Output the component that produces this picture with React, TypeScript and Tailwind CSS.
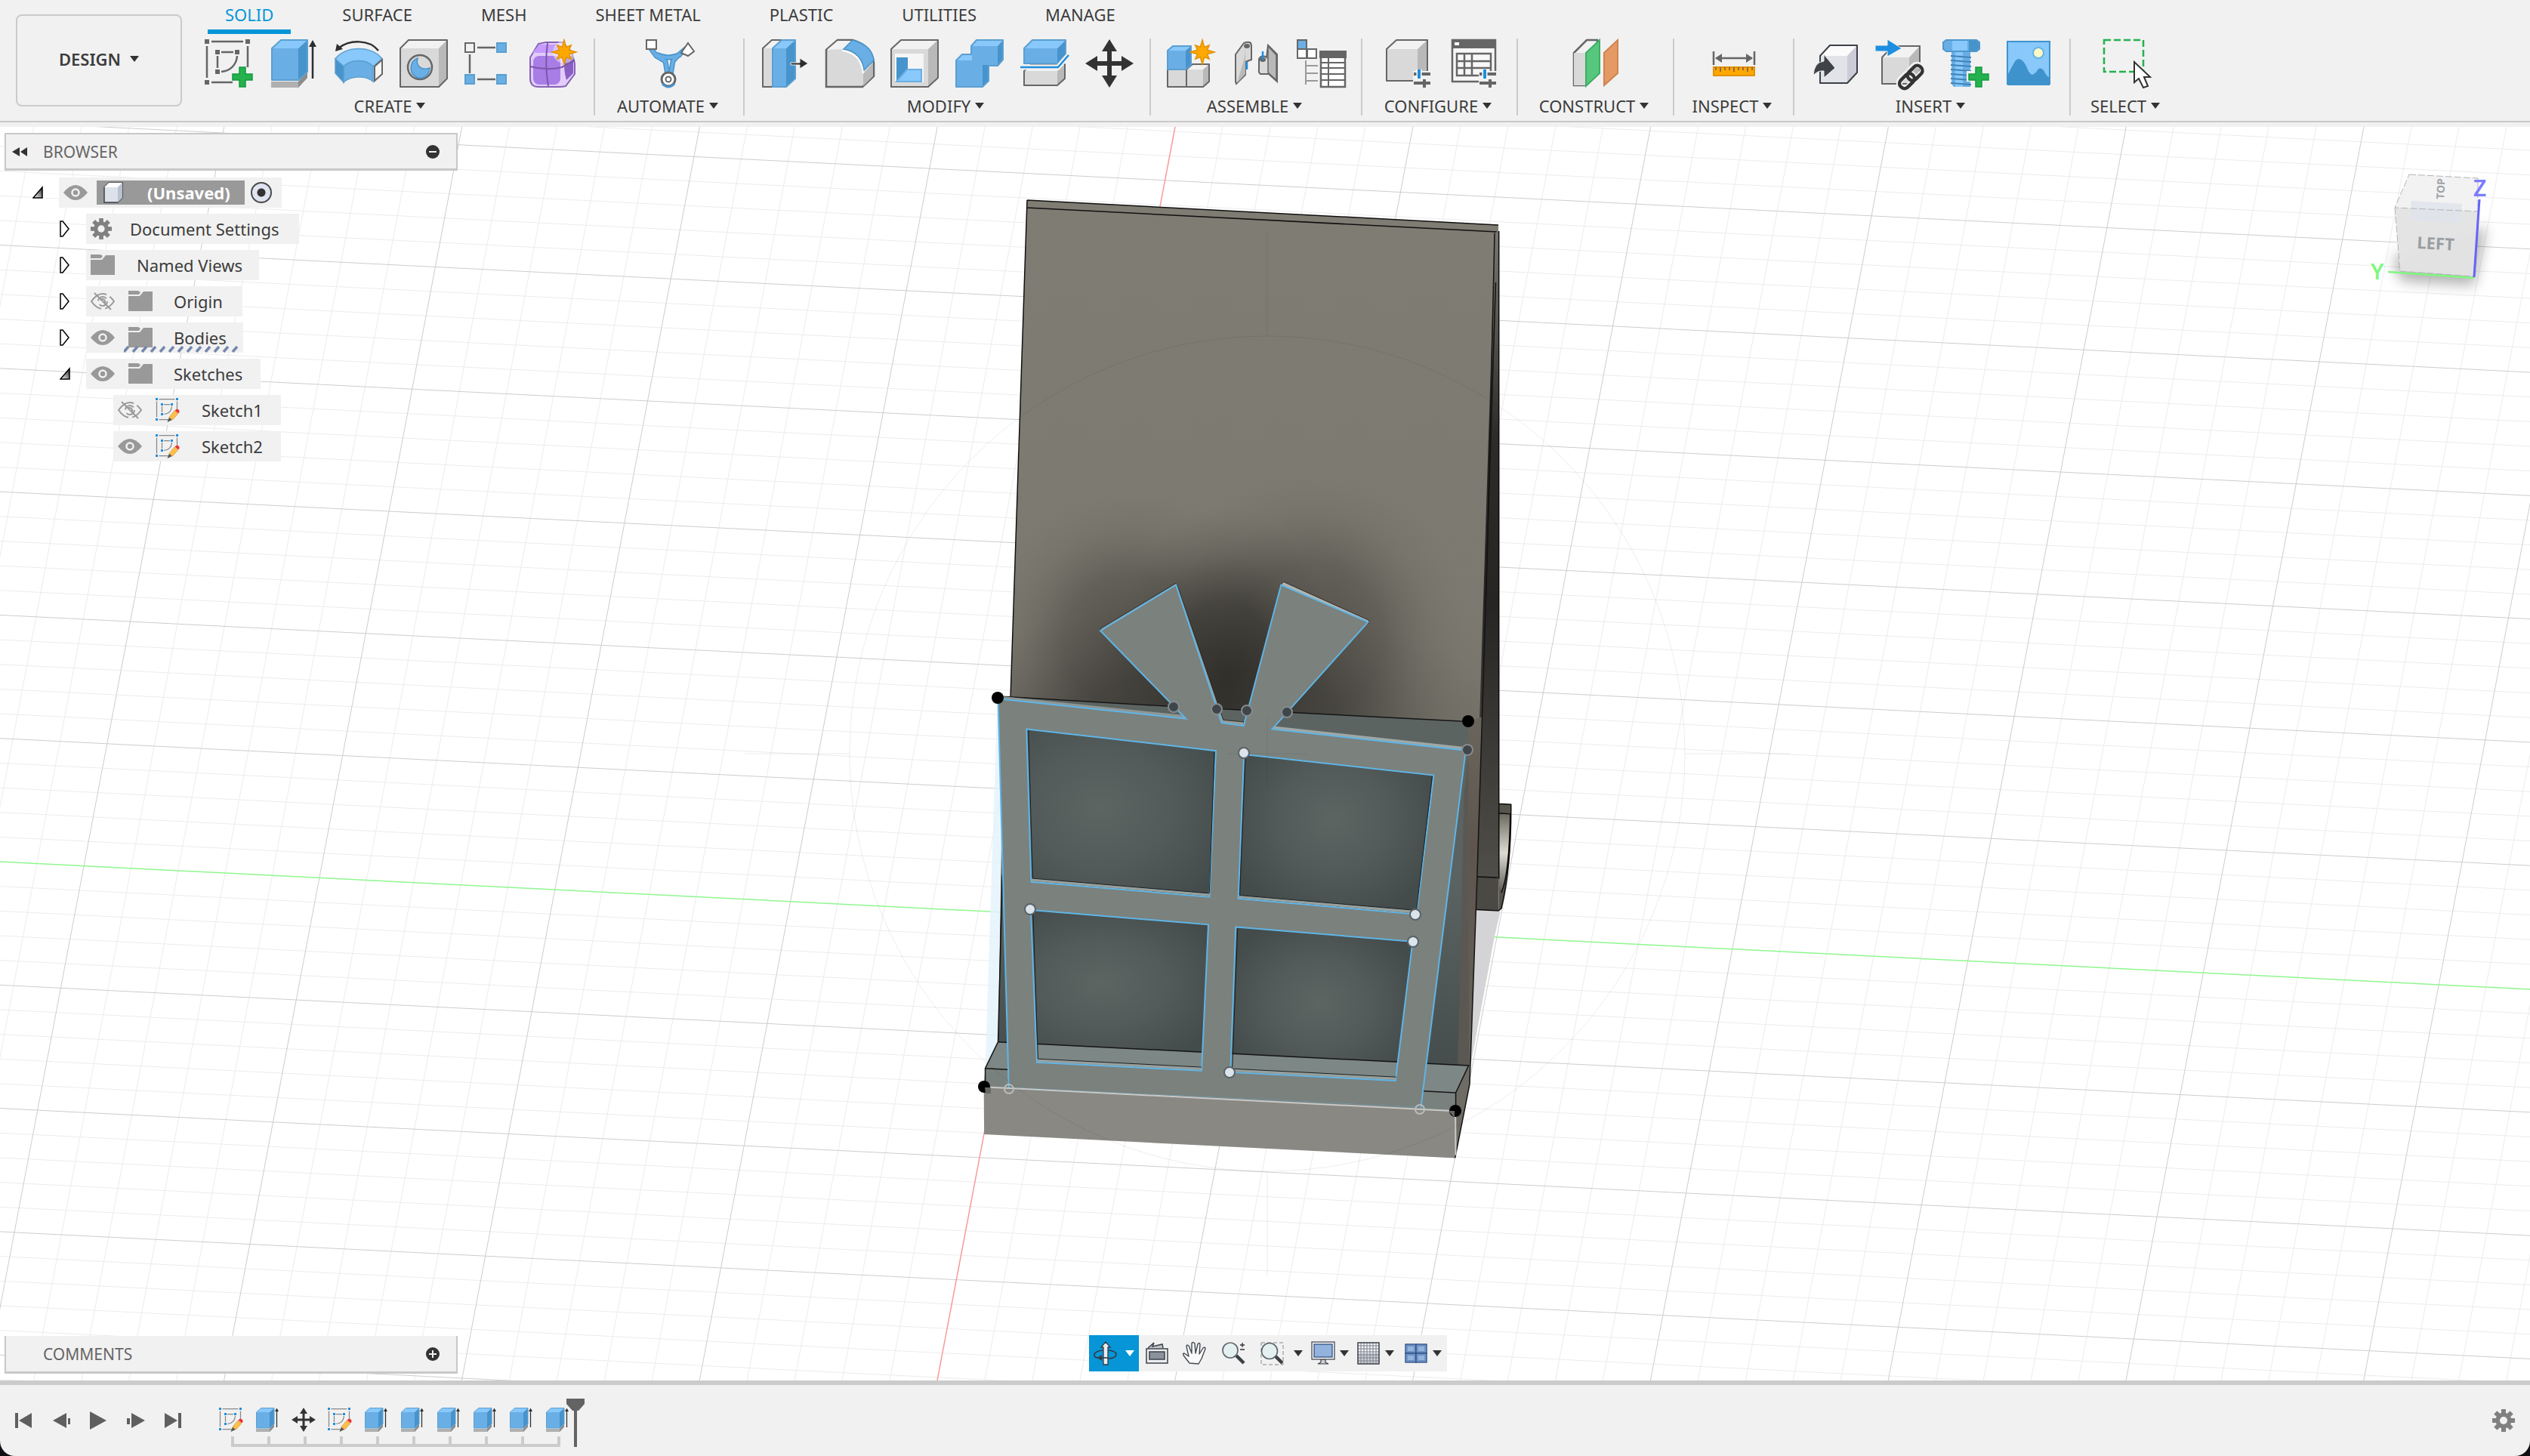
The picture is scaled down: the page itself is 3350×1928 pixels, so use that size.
import React from "react";

type Kids = { children?: React.ReactNode };

const OUT = "#666666";

function Ico({ children, s = 64, v = 64 }: Kids & { s?: number; v?: number }) {
  return (
    <svg width={s} height={s} viewBox={`0 0 ${v} ${v}`} fill="none" className="shrink-0 overflow-visible" aria-hidden="true">
      {children}
    </svg>
  );
}

const BLUE = ["#69afe5", "#88c8fa", "#4793cc", "#5b9fd0"];
const GRAY = ["#d9d9d9", "#f2f2f2", "#b9b9b9", OUT];

/* Box seen from the front left: x, y is the top-left corner of the front face. */
function Box({ x, y, w, h, dx = 12, dy = 12, c = GRAY, sw = 2 }: { x: number; y: number; w: number; h: number; dx?: number; dy?: number; c?: string[]; sw?: number }) {
  return (
    <g>
      <path d={`M${x} ${y}h${w}v${h}h${-w}z`} fill={c[0]} />
      <path d={`M${x} ${y}l${dx} ${-dy}h${w}l${-dx} ${dy}z`} fill={c[1]} />
      <path d={`M${x + w} ${y}l${dx} ${-dy}v${h}l${-dx} ${dy}z`} fill={c[2]} />
      <path d={`M${x} ${y}l${dx} ${-dy}h${w}v${h}l${-dx} ${dy}h${-w}z`} stroke={c[3]} strokeWidth={sw} strokeLinejoin="round" />
    </g>
  );
}

function Plus({ x, y }: { x: number; y: number }) {
  return <path d={`M${x - 4} ${y - 13}h8v9h9v8h-9v9h-8v-9h-9v-8h9z`} fill="#24b14e" stroke="#149a3d" strokeWidth="1.5" />;
}

function Burst({ x, y }: { x: number; y: number }) {
  const pts: string[] = [];
  for (let i = 0; i < 16; i++) {
    const r = i % 2 ? 7 : i % 4 ? 13 : 16;
    const a = (i * Math.PI) / 8;
    pts.push(`${(x + r * Math.sin(a)).toFixed(1)},${(y - r * Math.cos(a)).toFixed(1)}`);
  }
  return <polygon points={pts.join(" ")} fill="#ffa800" stroke="#e39200" strokeWidth="1.5" />;
}

const SketchBase = ({ sq, line }: { sq: string; line: string }) => (
  <g>
    <path d="M9 3h42M3 9v42M9 57h28M57 9v28M22 17h16M17 22v16M43 22C42 34 34 42 22 43" stroke={line} strokeWidth="2.5" />
    {[[3, 3], [57, 3], [3, 57], [17, 17], [43, 17], [17, 43]].map(([x, y]) => (
      <rect key={`${x}-${y}`} x={x - 3} y={y - 3} width="6" height="6" fill={sq} />
    ))}
  </g>
);

const CreateSketch = () => (
  <Ico>
    <SketchBase sq={OUT} line={OUT} />
    <Plus x={50} y={50} />
  </Ico>
);

const Extrude = ({ s = 64 }: { s?: number }) => (
  <Ico s={s}>
    <path d="M2 56h36l12-13v8L38 64H2z" fill="#b0b0b0" />
    <path d="M38 56l12-13v8L38 64z" fill="#8d8d8d" />
    <Box x={3} y={12} w={35} h={42} dy={11} c={BLUE} />
    <path d="M57 52V8" stroke="#2e2e2e" strokeWidth="2.5" />
    <path d="M57 1l5 9H52z" fill="#2e2e2e" />
  </Ico>
);

const Revolve = () => (
  <Ico>
    <path d="M5 12C20 0 46 0 58 15" stroke="#2e2e2e" strokeWidth="2.5" />
    <path d="M1 16L3 6l8 7z" fill="#2e2e2e" />
    <path d="M1 26C14 8 50 8 63 26L51 36C42 26 22 26 12 36z" fill="#88c8fa" stroke="#5b9fd0" strokeWidth="1.5" />
    <path d="M12 36C22 26 42 26 51 36v20C42 48 22 48 12 57z" fill="#69afe5" stroke="#5b9fd0" strokeWidth="1.5" />
    <path d="M1 26l11 10v21L1 45z" fill="#4793cc" stroke="#5b9fd0" strokeWidth="1.5" />
    <path d="M53 36l10-9v19l-10 9z" fill="#f6f6f6" stroke={OUT} strokeWidth="2" />
  </Ico>
);

const Hole = () => (
  <Ico>
    <Box x={1} y={12} w={51} h={51} dx={11} dy={11} />
    <circle cx="27" cy="37" r="16" fill="#d9d9d9" stroke={OUT} strokeWidth="2.5" />
    <path d="M24 25c-11 4-12 19-2 25 8 4 17-1 18-12C30 42 21 36 24 25z" fill="#69afe5" stroke="#4793cc" strokeWidth="1.5" />
  </Ico>
);

const Pattern = () => (
  <Ico>
    <path d="M17 11h24M17 53h24M7 20v25" stroke={OUT} strokeWidth="2.5" />
    <rect x="1" y="5" width="12" height="12" fill="#f1f1f1" stroke={OUT} strokeWidth="2" />
    <rect x="43" y="5" width="12" height="12" fill="#69afe5" stroke="#5b9fd0" strokeWidth="2" />
    <rect x="1" y="47" width="12" height="12" fill="#69afe5" stroke="#5b9fd0" strokeWidth="2" />
    <rect x="43" y="47" width="12" height="12" fill="#69afe5" stroke="#5b9fd0" strokeWidth="2" />
  </Ico>
);

const Form = () => (
  <Ico>
    <path d="M12 6L22 4h22l12 12 4 16v14L48 62q-4 1-8 1H12Q1 63 1 52V24z" fill="#e2ccfa" stroke="#8763b5" strokeWidth="2" />
    <path d="M13 7h26v11H4z" fill="#c59bff" />
    <rect x="5" y="22" width="36" height="38" rx="8" fill="#a97de6" />
    <path d="M46 25l12-4v24l-9 9q-4-14-3-29z" fill="#8a5fc4" />
    <path d="M24 5Q20 34 25 62M1 36q22 6 42 1l17-9" stroke="#7c56ab" strokeWidth="2" />
    <circle cx="46" cy="17" r="15" fill="#f1f1f1" opacity=".5" />
    <Burst x={46} y={17} />
  </Ico>
);

const Automate = () => (
  <Ico>
    <g transform="translate(-1 0)">
      <path d="M6 8l10 14 12 7 4 24M56 12L42 24l-4 5-4 24M16 20q16 8 32 0" stroke="#4793cc" strokeWidth="7" strokeLinejoin="round" />
      <path d="M6 8l10 14 12 7 4 24M56 12L42 24l-4 5-4 24M16 20q16 8 32 0" stroke="#69afe5" strokeWidth="4" strokeLinejoin="round" />
      <rect x="3" y="1" width="13" height="12" fill="#fff" stroke={OUT} strokeWidth="2" />
      <path d="M58 5l8 11-8 6-9-4z" fill="#fff" stroke={OUT} strokeWidth="2" />
      <circle cx="32" cy="53" r="9" fill="#fff" stroke={OUT} strokeWidth="3" />
      <circle cx="32" cy="53" r="3.500" fill="#fff" stroke={OUT} strokeWidth="2" />
      <path d="M24 59q8 8 16 0" stroke="#4793cc" strokeWidth="3" />
    </g>
  </Ico>
);

const PressPull = () => (
  <Ico>
    <Box x={3} y={12} w={12} h={51} dx={12} dy={11} />
    <Box x={16} y={12} w={18} h={51} dx={12} dy={11} c={BLUE} />
    <path d="M40 31h12v-6l11 7-11 7v-5H40z" fill="#2e2e2e" stroke="#f1f1f1" strokeWidth="1" />
  </Ico>
);

const Fillet = () => (
  <Ico>
    <path d="M1 14L16 1h20q26 8 28 30v18L49 63H1z" fill="#d9d9d9" stroke={OUT} strokeWidth="2.5" />
    <path d="M2 14L16 2h18L24 13z" fill="#f2f2f2" />
    <path d="M50 46l13-15v18L50 62z" fill="#b9b9b9" />
    <path d="M24 13L36 1q26 7 28 27L51 41Q48 17 24 13z" fill="#69afe5" stroke="#4793cc" strokeWidth="1.5" />
    <path d="M22 15q25 3 28 30" stroke="#fff" strokeWidth="2" />
  </Ico>
);

const Shell = () => (
  <Ico>
    <Box x={1} y={13} w={49} h={50} dx={13} dy={12} />
    <rect x="6" y="19" width="38" height="38" fill="#f5f5f5" />
    <path d="M8 24h15v18L8 55z" fill="#4793cc" />
    <path d="M8 56l14-16h19v16z" fill="#88c8fa" stroke="#69afe5" strokeWidth="2" />
  </Ico>
);

const Combine = () => (
  <Ico>
    <Box x={21} y={9} w={35} h={26} dx={7} dy={8} c={BLUE} />
    <Box x={1} y={28} w={35} h={35} dx={8} dy={8} c={BLUE} />
    <path d="M22 10h33v24H22z" fill="#69afe5" />
    <path d="M2 28h33v34H2z" fill="#69afe5" />
  </Ico>
);

const SplitBody = () => (
  <Ico>
    <Box x={5} y={42} w={44} h={19} dx={10} dy={9} />
    <Box x={5} y={12} w={44} h={20} dx={11} dy={11} c={BLUE} />
    <path d="M0 37h50l14-16" stroke="#f1f1f1" strokeWidth="7" />
    <path d="M0 37h50l14-16" stroke="#1e8ee0" strokeWidth="2.500" />
  </Ico>
);

const Move = ({ s = 64, v = 64 }: { s?: number; v?: number }) => (
  <Ico s={s} v={v}>
    <path d="M32 0l10 16h-7v13h13v-7l16 10-16 10v-7H35v13h7L32 64 22 48h7V35H16v7L0 32l16-10v7h13V16h-7z" fill="#333" />
  </Ico>
);

const NewComponent = () => (
  <Ico>
    <Box x={1} y={40} w={24} h={23} dx={8} dy={7} />
    <Box x={26} y={40} w={22} h={23} dx={8} dy={7} />
    <Box x={1} y={15} w={24} h={25} dx={7} dy={6} c={BLUE} />
    <Burst x={47} y={17} />
  </Ico>
);

const Joint = () => (
  <Ico>
    <path d="M5 20L16 5q10-4 10 4v18l-8 3v17L6 59l-1-3z" fill="#d9d9d9" stroke={OUT} strokeWidth="2" />
    <path d="M18 12v34L7 58l10-34z" fill="#b9b9b9" />
    <path d="M60 56L49 46H38q-3-2-2-6V26q4-6 10-2l2-16 12 12z" fill="#d9d9d9" stroke={OUT} strokeWidth="2" />
    <path d="M48 9l11 12v33L48 44z" fill="#b9b9b9" stroke={OUT} strokeWidth="1.500" />
    <ellipse cx="20" cy="9" rx="4" ry="3" fill={OUT} />
    <ellipse cx="41" cy="27" rx="4" ry="3" fill={OUT} />
    <path d="M20 30v10M41 16v11" stroke="#1e8ee0" strokeWidth="2.5" />
  </Ico>
);

const Bom = () => (
  <Ico>
    <path d="M12 28v32M12 35h16M12 45h16M12 55h16" stroke="#999" strokeWidth="2" />
    <rect x="1" y="13" width="12" height="12" fill="#fff" stroke={OUT} strokeWidth="2" />
    <rect x="14" y="13" width="12" height="12" fill="#fff" stroke={OUT} strokeWidth="2" />
    <rect x="1" y="1" width="12" height="12" fill="#69afe5" stroke={OUT} strokeWidth="2" />
    <path d="M32 17h32v46H32z" fill="#fff" stroke={OUT} strokeWidth="2.500" />
    <path d="M31 16h34v8H31zM32 31h32M32 38h32M32 46h32M32 54h32M42 24v39" fill={OUT} stroke={OUT} strokeWidth="2" />
  </Ico>
);

const Sliders = () => (
  <g>
    <path d="M41 46h22M41 58h22M55 53v11" stroke={OUT} strokeWidth="4" />
    <path d="M48 40v12" stroke="#fff" strokeWidth="7" />
    <path d="M48 40v12" stroke="#1e8ee0" strokeWidth="4" />
  </g>
);

const ConfigModel = () => (
  <Ico>
    <g transform="translate(-2 0)">
      <Box x={7} y={13} w={41} h={42} dx={13} dy={12} />
      <path d="M42 42h24v22H42z" fill="#f1f1f1" />
      <g transform="translate(2 0)">
        <Sliders />
      </g>
    </g>
  </Ico>
);

const ConfigTable = () => (
  <Ico>
    <g transform="translate(-1 0)">
      <path d="M7 1h57v55H7z" fill="#f7f7f7" stroke={OUT} strokeWidth="2.500" />
      <path d="M6 0h59v12H6z" fill={OUT} />
      <rect x="10" y="4" width="6" height="4" fill="#fff" />
      <path d="M13 19h45v29H13zM13 29h45M13 38h45M23 19v29M33 19v29" stroke={OUT} strokeWidth="2.500" />
      <path d="M42 42h24v22H42z" fill="#f1f1f1" />
      <g transform="translate(2 0)">
        <Sliders />
      </g>
    </g>
  </Ico>
);

const Plane = () => (
  <Ico>
    <path d="M3 18L20 1h14v45L18 61H3z" fill="#f2f2f2" stroke={OUT} strokeWidth="2.500" />
    <path d="M3 18h15v43H3z" fill="#d9d9d9" />
    <path d="M19 18L37 1v44L19 62z" fill="#57c77d" stroke="#3fae66" strokeWidth="2" />
    <path d="M43 18L61 1v44L43 61z" fill="#e59a66" stroke="#cf8450" strokeWidth="2" />
  </Ico>
);

const Measure = () => (
  <Ico>
    <path d="M5 16v18M59 16v18M8 25h48" stroke={OUT} strokeWidth="2.500" />
    <path d="M7 25l9-6v12zM57 25l-9-6v12z" fill={OUT} />
    <rect x="5" y="37" width="54" height="11" fill="#ffa800" stroke="#e39200" strokeWidth="2" />
    <path d="M8 37v4M14 37v6M20 37v4M26 37v4M32 37v6M38 37v4M44 37v4M50 37v6M56 37v4" stroke="#755" strokeWidth="1.500" />
  </Ico>
);

const InsertDerive = () => (
  <Ico>
    <Box x={13} y={22} w={36} h={36} dx={13} dy={14} c={["#e2e3e8", "#fbfbfc", "#cbccd6", "#3c4048"]} />
    <path d="M4 48q1-18 14-19v-9l15 18-15 13v-9q-8-1-14 6z" fill="#3f4347" stroke="#f1f1f1" strokeWidth="1" />
  </Ico>
);

const InsertLink = () => (
  <Ico>
    <Box x={9} y={24} w={36} h={35} dx={14} dy={15} />
    <path d="M0 8h16V0l19 12-19 11v-7H0z" fill="#1e8ee0" stroke="#f1f1f1" strokeWidth="1" />
    <g transform="rotate(-45 48 50)">
      <rect x="29" y="42" width="22" height="14" rx="7" stroke="#f1f1f1" strokeWidth="8" />
      <rect x="45" y="42" width="22" height="14" rx="7" stroke="#f1f1f1" strokeWidth="8" />
      <rect x="29" y="43" width="22" height="13" rx="6" stroke="#333" strokeWidth="4.500" />
      <rect x="44" y="43" width="22" height="13" rx="6" stroke="#333" strokeWidth="4.500" />
    </g>
  </Ico>
);

const Fastener = () => (
  <Ico>
    <path d="M15 14h25v49H18l-3-4z" fill="#69afe5" />
    <path d="M20 14h10v49H20z" fill="#88c8fa" />
    <path d="M14 22l27 2M14 28l27 2M14 34l27 2M14 40l27 2M14 46l27 2M14 52l27 2M14 58l27 2" stroke="#3f83b8" strokeWidth="2" />
    <path d="M4 4l4-3h40l4 3v9l-4 3H8l-4-3z" fill="#69afe5" stroke="#4f97cc" strokeWidth="2" />
    <path d="M38 2h10l3 3v7l-3 3H38z" fill="#4793cc" />
    <path d="M16 2h20v13H16z" fill="#88c8fa" />
    <path d="M46 32h14v9h9v16h-9v9H44V56h-9V42h11z" fill="#f1f1f1" />
    <Plus x={51} y={50} />
  </Ico>
);

const Picture = () => (
  <Ico>
    <rect x="3" y="3" width="56" height="56" fill="#88c8fa" stroke="#3f93cc" strokeWidth="2" />
    <path d="M3 48Q8 38 12 31t9-4 8 11 7 9q5-2 8-8 5-2 8 4t7 8v10H3z" fill="#3f93cc" />
    <circle cx="44" cy="18" r="7" fill="#fdf8c5" stroke="#62b4e6" strokeWidth="2" />
  </Ico>
);

const Select = () => (
  <Ico>
    <path d="M2 1h52v42H2z" stroke="#24b14e" strokeWidth="2.500" strokeDasharray="9 4" />
    <path d="M42 30v27l6-5 6 12 6-2-5-12h8z" fill="#fff" stroke="#333" strokeWidth="2" />
  </Ico>
);

const Caret = ({ c = "border-t-[#333]" }: { c?: string }) => (
  <span className={`inline-block h-0 w-0 border-x-[6px] border-t-[8px] border-x-transparent ${c}`} />
);

const groups: { label: string; w: string; icons: [string, () => React.ReactElement][] }[] = [
  { label: "CREATE", w: "w-[538px]", icons: [["Create Sketch", CreateSketch], ["Extrude", () => <Extrude />], ["Revolve", Revolve], ["Hole", Hole], ["Pattern", Pattern], ["Create Form", Form]] },
  { label: "AUTOMATE", w: "w-[198px]", icons: [["Automated Modeling", Automate]] },
  { label: "MODIFY", w: "w-[538px]", icons: [["Press Pull", PressPull], ["Fillet", Fillet], ["Shell", Shell], ["Combine", Combine], ["Split Body", SplitBody], ["Move", () => <Move />]] },
  { label: "ASSEMBLE", w: "w-[280px]", icons: [["New Component", NewComponent], ["Joint", Joint], ["Bill of Materials", Bom]] },
  { label: "CONFIGURE", w: "w-[206px]", icons: [["Configure Model", ConfigModel], ["Configuration Table", ConfigTable]] },
  { label: "CONSTRUCT", w: "w-[207px]", icons: [["Offset Plane", Plane]] },
  { label: "INSPECT", w: "w-[159px]", icons: [["Measure", Measure]] },
  { label: "INSERT", w: "w-[366px]", icons: [["Insert Derive", InsertDerive], ["Insert Link", InsertLink], ["Insert Fastener", Fastener], ["Canvas", Picture]] },
  { label: "SELECT", w: "w-[150px]", icons: [["Select Tool", Select]] },
];

const tabs = ["SOLID", "SURFACE", "MESH", "SHEET METAL", "PLASTIC", "UTILITIES", "MANAGE"];

function Ribbon() {
  return (
    <header className="shrink-0 bg-[#f1f1f1] pb-1.5">
      <div className="flex h-[162px] border-b-2 border-[#c8c8c8]">
        <div className="w-[250px] shrink-0 pt-[19px] pl-[21px]">
          <button className="flex h-[122px] w-[220px] items-center justify-center gap-3 rounded-lg border-2 border-[#cbcbcb] pb-1 font-semibold">
            DESIGN <Caret />
          </button>
        </div>
        <div className="flex flex-col">
          <nav className="ml-[25px] flex h-[45px] gap-[45px]" aria-label="Workspace tabs">
            {tabs.map((t, i) => (
              <button
                key={t}
                className={i === 0 ? "border-b-[6px] border-[#0696d7] px-[23px] leading-[39px] text-[#0696d7]" : "border-b-[6px] border-transparent px-[23px] leading-[39px]"}
              >
                {t}
              </button>
            ))}
          </nav>
          <div className="mt-1.5 flex">
            {groups.map((g) => (
              <section key={g.label} aria-label={g.label} className={`${g.w} flex h-[102px] shrink-0 flex-col items-center justify-between border-r-2 border-[#cbcbcb] pt-px last:border-transparent`}>
                <div className="flex gap-[22px]">
                  {g.icons.map(([name, I]) => (
                    <button key={name} aria-label={name} className="h-16 w-16">
                      <I />
                    </button>
                  ))}
                </div>
                <button className="flex h-[26px] items-center gap-1.5 pr-1 leading-[26px]">
                  {g.label} <Caret />
                </button>
              </section>
            ))}
          </div>
        </div>
      </div>
    </header>
  );
}

/* ---------- browser tree ---------- */

const Eye = ({ off = false }: { off?: boolean }) => (
  <svg width="32" height="32" viewBox="0 0 32 32" fill="none" aria-hidden="true">
    {off ? (
      <g stroke="#999" strokeWidth="2">
        <path d="M1 16Q8 6 16 6t15 10q-7 10-15 10T1 16z" strokeDasharray="24 5" />
        <circle cx="16" cy="16" r="6" strokeDasharray="14 5" />
        <path d="M5 5l22 22" />
        <path d="M14 13a4 4 0 0 1 5 5" />
      </g>
    ) : (
      <g>
        <path d="M0 16Q8 6 16 6t16 10q-8 10-16 10T0 16z" fill="#999" />
        <circle cx="16" cy="16" r="4.500" stroke="#f1f1f1" strokeWidth="2.500" />
      </g>
    )}
  </svg>
);

const Folder = () => (
  <svg width="32" height="32" viewBox="0 0 32 32" aria-hidden="true">
    <path d="M0 2h13l3 2-2 3H0z" fill="#999" />
    <path d="M0 9h15l5-6h12v26H0z" fill="#999" />
  </svg>
);

const Gear = ({ s = 30 }: { s?: number }) => (
  <svg width={s} height={s} viewBox="0 0 30 30" aria-hidden="true">
    <g fill="#808080">
      {[0, 45, 90, 135].map((a) => (
        <rect key={a} x="12" y="0" width="6" height="30" transform={`rotate(${a} 15 15)`} />
      ))}
      <circle cx="15" cy="15" r="10.500" />
    </g>
    <circle cx="15" cy="15" r="5" fill="#f1f1f1" />
  </svg>
);

const SketchIcon = () => (
  <Ico s={32}>
    <SketchBase sq="#1e8ee0" line="#888" />
    <path d="M31 64l5-13 8 7z" fill="#555" />
    <path d="M36 51l14-17 9 8-14 16z" fill="#fbbf4b" stroke="#d99a2b" strokeWidth="1.500" />
    <path d="M51 33q5-6 11-1 3 5-2 9z" fill="#ee3333" />
  </Ico>
);

const Arrow = ({ open }: { open: boolean }) => (
  <svg width="14" height="22" viewBox="0 0 14 22" className="shrink-0" aria-hidden="true">
    <defs>
      <linearGradient id="open" x1="0" y1="1" x2="1" y2="0">
        <stop offset="0" stopColor="#fff" />
        <stop offset="1" stopColor="#222" />
      </linearGradient>
    </defs>
    {open ? (
      <path d="M13 4v14H1z" fill="url(#open)" stroke="#000" strokeWidth="1.500" />
    ) : (
      <path d="M1 1h3l8 10-8 10H1z" fill="#fff" stroke="#000" strokeWidth="1.500" />
    )}
  </svg>
);

type Row = { name: string; pad: string; text: string; open?: boolean; leaf?: boolean; eye?: "on" | "off"; icon: "folder" | "gear" | "sketch" };

const rows: Row[] = [
  { name: "Document Settings", pad: "pl-[79px]", text: "ml-[24px] pr-[27px]", icon: "gear" },
  { name: "Named Views", pad: "pl-[79px]", text: "ml-[29px] pr-[22px]", icon: "folder" },
  { name: "Origin", pad: "pl-[79px]", text: "ml-[28px] pr-[26px]", eye: "off", icon: "folder" },
  { name: "Bodies", pad: "pl-[79px]", text: "ml-[28px] pr-[22px]", eye: "on", icon: "folder" },
  { name: "Sketches", pad: "pl-[79px]", text: "ml-[28px] pr-[24px]", open: true, eye: "on", icon: "folder" },
  { name: "Sketch1", pad: "pl-[150px]", text: "ml-[29px] pr-[24px]", leaf: true, eye: "off", icon: "sketch" },
  { name: "Sketch2", pad: "pl-[150px]", text: "ml-[29px] pr-[24px]", leaf: true, eye: "on", icon: "sketch" },
];

function Browser() {
  return (
    <aside>
      <div className="mt-2 ml-1.5 flex h-[50px] w-[600px] items-center border-2 border-b-[3px] border-[#c8c8c8] bg-[#f1f1f1] pr-[22px] pl-2 text-[21px] text-[#666]">
        <button aria-label="Collapse browser">
          <svg width="20" height="12" viewBox="0 0 20 12" aria-hidden="true">
            <path d="M10 0v12L0 6zM20 0v12l-9-6z" fill="#333" />
          </svg>
        </button>
        <h2 className="ml-[21px] flex-1">BROWSER</h2>
        <button aria-label="Minimize">
          <svg width="18" height="18" viewBox="0 0 18 18" aria-hidden="true">
            <circle cx="9" cy="9" r="9" fill="#333" />
            <path d="M4 9h10" stroke="#f1f1f1" strokeWidth="2" />
          </svg>
        </button>
      </div>
      <ul className="mt-[9px] flex flex-col items-start gap-2">
        <li className="flex h-10 items-center pl-[43px]">
          <Arrow open />
          <div className="ml-[21px] flex h-10 items-center bg-[#f1f1f1] pr-[13px] pl-1.5">
            <Eye />
            <label htmlFor="active-component" className="ml-3 flex h-8 w-[196px] items-center bg-[#999] pl-2 font-bold text-white">
              <svg width="28" height="30" viewBox="0 0 28 30" aria-hidden="true">
                <path d="M2 8l6-6h18v20l-6 6H2z" fill="#dde1ea" stroke="#3c4048" strokeWidth="1.500" />
                <path d="M2 8l6-6h18l-6 6z" fill="#fff" />
                <path d="M20 8l6-6v20l-6 6z" fill="#bcc1cf" />
              </svg>
              <span className="ml-[31px]">(Unsaved)</span>
            </label>
            <input
              id="active-component"
              type="radio"
              name="active"
              defaultChecked
              className="ml-2 h-7 w-7 appearance-none rounded-full border-2 border-[#4a4a4a] bg-[radial-gradient(circle,#333_5px,#dfe4f0_6px)]"
            />
          </div>
        </li>
        {rows.map((r) => (
          <li key={r.name} className={`flex h-10 items-center ${r.pad}`}>
            {!r.leaf && (
              <span className="mr-[21px] flex">
                <Arrow open={!!r.open} />
              </span>
            )}
            <div className="flex h-10 items-center bg-[#f1f1f1] pl-1.5">
              {r.eye && (
                <span className="mr-[18px]">
                  <Eye off={r.eye === "off"} />
                </span>
              )}
              <span className="relative flex items-center">
                {r.icon === "gear" ? <Gear s={28} /> : r.icon === "folder" ? <Folder /> : <SketchIcon />}
                <span className={r.text}>{r.name}</span>
                {r.name === "Bodies" && (
                  <svg width="154" height="9" viewBox="0 0 154 9" className="absolute -bottom-1 -left-1.5" aria-hidden="true">
                    {Array.from({ length: 13 }, (_, i) => (
                      <path key={i} d={`M${i * 12} 8l6-7`} stroke="#7486ab" strokeWidth="3.500" />
                    ))}
                  </svg>
                )}
              </span>
            </div>
          </li>
        ))}
      </ul>
    </aside>
  );
}

/* ---------- 3D canvas ---------- */

const blackDots = [[1321, 924], [1944, 955], [1303, 1439], [1927, 1471]];
const grayDots = [[1554, 936], [1611, 939], [1651, 941], [1704, 943], [1943, 993]];
const clearDots = [[1336, 1442], [1880, 1469]];
const whiteDots = [[1647, 997], [1874, 1211], [1871, 1247], [1364, 1204], [1628, 1420]];

const windows = [
  "M168 431L699 486L681 856L181 818z",
  "M778 495L1310 548L1262 900L762 860z",
  "M180 889L678 926L659 1296L197 1275z",
  "M755 932L1251 969L1203 1321L740 1300z",
];

function Scene() {
  const minor: React.ReactElement[] = [];
  const major: React.ReactElement[] = [];
  for (let k = -26; k <= 35; k++) {
    if (k === 0) continue;
    const x = 1556 + 62.96 * k;
    (k % 5 ? minor : major).push(<path key={`v${k}`} d={`M${x} 168L${x - 315} 1828`} />);
  }
  for (let k = -36; k <= 22; k++) {
    if (k === 0) continue;
    const y = 1141 + 32.66 * k;
    (k % 5 ? minor : major).push(<path key={`h${k}`} d={`M0 ${y}L3350 ${y + 168.5}`} />);
  }
  return (
    <svg viewBox="0 168 3350 1660" preserveAspectRatio="xMidYMid slice" className="absolute inset-0 h-full w-full" fill="none" role="img" aria-label="Model view">
      <defs>
        <linearGradient id="plate" x1="0" y1="0" x2="0" y2="1">
          <stop offset="0" stopColor="#7f7c73" />
          <stop offset=".6" stopColor="#7c7970" />
          <stop offset="1" stopColor="#6f6c64" />
        </linearGradient>
        <radialGradient id="occ">
          <stop offset="0" stopColor="#262421" />
          <stop offset=".45" stopColor="#33312d" stopOpacity=".7" />
          <stop offset=".75" stopColor="#44423c" stopOpacity=".22" />
          <stop offset="1" stopColor="#55524b" stopOpacity="0" />
        </radialGradient>
        <radialGradient id="pane">
          <stop offset="0" stopColor="#5d6563" />
          <stop offset=".5" stopColor="#535b5a" />
          <stop offset="1" stopColor="#434b4b" />
        </radialGradient>
        <linearGradient id="side" x1="0" y1="0" x2="0" y2="1">
          <stop offset="0" stopColor="#7a776e" />
          <stop offset=".3" stopColor="#2d2c29" />
          <stop offset=".55" stopColor="#262523" />
          <stop offset="1" stopColor="#55534d" />
        </linearGradient>
        <linearGradient id="wall" x1="0" y1="0" x2="0" y2="1">
          <stop offset="0" stopColor="#6a655c" />
          <stop offset=".3" stopColor="#5e564e" />
          <stop offset="1" stopColor="#6b6862" />
        </linearGradient>
        <linearGradient id="inner" x1="0" y1="0" x2="0" y2="1">
          <stop offset="0" stopColor="#5c6462" />
          <stop offset=".5" stopColor="#5a6361" />
          <stop offset="1" stopColor="#464e4d" />
        </linearGradient>
        <linearGradient id="ring" x1="0" y1="0" x2="0" y2="1">
          <stop offset="0" stopColor="#6b6860" />
          <stop offset=".5" stopColor="#dedbd2" />
          <stop offset="1" stopColor="#5d5a53" />
        </linearGradient>
        <clipPath id="plateClip">
          <path d="M1360 265L1984 298L1961 962L1338 930z" />
        </clipPath>
        <clipPath id="windowsClip">
          {windows.map((d) => (
            <path key={d} d={d} />
          ))}
        </clipPath>
        <filter id="soft" x="-50%" y="-50%" width="200%" height="200%">
          <feGaussianBlur stdDeviation="9" />
        </filter>
      </defs>

      <rect y="168" width="3350" height="1660" fill="#fff" />
      <g stroke="#ececec">{minor}</g>
      <g stroke="#cdcdcd">{major}</g>
      <path d="M1556 168L1241 1828" stroke="#f99a9a" strokeWidth="1.500" />
      <path d="M0 1141L3350 1310" stroke="#8ff78f" strokeWidth="1.500" />

      {/* upper plate */}
      <path d="M1360 265L1984 298L1984 1064L1958 1164L1944 955L1338 930z" fill="url(#plate)" />
      <g clipPath="url(#plateClip)">
        <ellipse cx="1600" cy="960" rx="400" ry="160" fill="url(#occ)" opacity=".75" />
        <ellipse cx="1622" cy="900" rx="150" ry="230" fill="url(#occ)" opacity=".9" />
        <ellipse cx="1500" cy="850" rx="200" ry="200" fill="url(#occ)" opacity=".5" />
        <ellipse cx="1735" cy="845" rx="210" ry="220" fill="url(#occ)" opacity=".5" />
      </g>
      <path d="M1360 265L1984 298M1359 275L1982 307M1360 265L1338 924" stroke="#111" strokeWidth="1.500" />

      <g transform="translate(1280 740) scale(.472 .523)">
        {/* ground shadow */}
        <path d="M1425 888L1497 893L1480 960L1412 1290z" fill="#d4d4d6" />
        {/* back side and rod end */}
        <path d="M1482 -825L1493 -830L1493 810L1490 891L1430 888L1432 600z" fill="url(#side)" />
        <path d="M1432 805L1489 807L1492 891L1430 888z" fill="#4b4944" />
        <path d="M1493 620L1527 622Q1528 780 1500 885L1492 891z" fill="#57544d" />
        <path d="M1494 645L1524 646Q1524 800 1500 845L1494 830z" fill="url(#ring)" />
        <path vectorEffect="non-scaling-stroke" stroke="#0c0c0c" strokeWidth="1.500" d="M1493 -830V810M1432 805L1489 807M1430 888L1492 891L1500 885Q1528 780 1527 622L1493 620M1493 644L1525 646Q1522 800 1500 845" />
        {/* right wall of the box */}
        <path d="M1407 412L1446 400L1432 805L1411 1330L1370 1517L1371 1395z" fill="url(#wall)" />
        {/* inner box */}
        <path d="M100 349L1407 412L1408 1283L88 1223L100 560z" fill="url(#inner)" />
        <path d="M1395 600L1407 500L1408 1283L1378 1282z" fill="#5b5853" />
        <g clipPath="url(#windowsClip)">
          <rect x="-20" y="330" width="790" height="600" fill="url(#pane)" />
          <rect x="720" y="400" width="620" height="520" fill="url(#pane)" />
          <rect x="20" y="850" width="720" height="450" fill="url(#pane)" />
          <rect x="700" y="900" width="580" height="450" fill="url(#pane)" />
        </g>
        {/* tray */}
        <path d="M88 1223L1408 1283L1372 1352L52 1290z" fill="#7d8785" />
        <path d="M52 1290L1372 1352L1371 1398L48 1337z" fill="#79817e" />
        <path d="M48 1337L1371 1398L1370 1517L49 1457z" fill="#8a8883" />
        <path d="M1372 1352L1410 1284L1409 1340L1370 1517z" fill="#6f6c66" />
        {/* sketch plane outside the body */}
        <path d="M86 352L100 560L88 1223L52 1290z" fill="#e3f2fc" opacity=".8" />
        <g stroke="#141414" strokeWidth="1.500">
          {[
            "M90 348L580 374L1407 412",
            "M1481 -825L1460 0L1432 805L1411 1330L1370 1517",
            "M1484 -700L1456 100",
            "M100 800L88 1223L52 1290V1335",
            "M88 1223L1408 1283L1372 1352L52 1290",
            "M1372 1352V1398",
          ].map((d) => (
            <path key={d} vectorEffect="non-scaling-stroke" d={d} />
          ))}
        </g>
        {/* thickness of the present frame */}
        <path d="M90 347L610 396L615 405L88 354z" fill="#8f9794" />
        <path d="M375 182L377 176L587 62L592 70L720 408L778 413L777 423L715 415z" fill="#999e99" stroke="#111" strokeWidth="1.500" />
        <path d="M882 66L888 58L1129 156L1126 164z" fill="#b4b4ae" stroke="#111" strokeWidth="1.500" />
        <path d="M857 431L866 424L1405 477L1400 487z" fill="#a0a7a4" />
        {/* frame face */}
        <path
          fillRule="evenodd"
          vectorEffect="non-scaling-stroke"
          stroke="#5fb5e6"
          strokeWidth="2"
          fill="#7b817d"
          d={`M88 354L615 405L375 182L587 66L715 415L777 423L882 66L1126 160L857 431L1400 485L1274 1390L118 1340z ${windows.join(" ")}`}
        />
        <path d="M183 809L681 847L681 854L181 816z" fill="#98a09d" />
        <path d="M765 852L1262 890L1261 898L763 858z" fill="#98a09d" />
        <path d="M198 1266L659 1287L659 1294L198 1273z" fill="#98a09d" />
        <path d="M742 1291L1205 1312L1203 1319L741 1298z" fill="#98a09d" />
        <g stroke="#1b2022" strokeWidth="1">
          {["M173 434L185 809L681 847", "M782 500L766 852L1262 890", "M186 892L200 1266L659 1287", "M760 936L745 1291L1205 1312", "M1306 550L1262 888", "M695 488L681 845"].map((d) => (
            <path key={d} vectorEffect="non-scaling-stroke" d={d} />
          ))}
        </g>
        <path d="M118 1341L1274 1391" stroke="#7b817d" strokeWidth="5" />
        <path vectorEffect="non-scaling-stroke" d="M48 1337L1371 1398L1372 1510" stroke="#c9c9c7" strokeWidth="2" />
      </g>

      {/* orbit guide */}
      <g stroke="#000" strokeOpacity=".07">
        <circle cx="1678" cy="998" r="553" />
        <path d="M1678 306V445M1678 1551V1690M986 998H1125M2231 998H2370M1678 950V1046M1624 998H1732" />
      </g>

      {blackDots.map(([x, y]) => (
        <circle key={`${x}`} cx={x} cy={y} r="8" fill="#000" />
      ))}
      <path d="M1304 1440L1305 1448H1312V1440zM1918 1471H1926V1480z" fill="#666" />
      {grayDots.map(([x, y]) => (
        <circle key={`${x}`} cx={x} cy={y} r="7" fill="#3f464a" stroke="#858b8e" strokeWidth="2" />
      ))}
      {clearDots.map(([x, y]) => (
        <circle key={`${x}`} cx={x} cy={y} r="6" stroke="#b9bcbc" strokeWidth="2" />
      ))}
      {whiteDots.map(([x, y]) => (
        <circle key={`${x}`} cx={x} cy={y} r="7" fill="#dbe4ea" stroke="#596267" strokeWidth="2" />
      ))}

      {/* view cube */}
      <g fontFamily="'Noto Sans', sans-serif">
        <path d="M3170 340L3178 372L3276 378L3292 300z" fill="#000" opacity=".3" filter="url(#soft)" />
        <path d="M3190 231L3281 236L3281 280L3171 275z" fill="#f1f1f1" fillOpacity=".95" />
        <path d="M3171 275L3281 280L3276 366L3178 359z" fill="#e3e3e4" fillOpacity=".97" />
        <path d="M3193 266L3260 270L3259 295L3191 292z" fill="#dfe2ea" opacity=".8" />
        <path d="M3190 231L3281 236V280L3171 275zM3171 275L3178 359L3276 366" stroke="#b5b5b5" strokeDasharray="9 3" />
        <text x="3200" y="329" fontSize="22" fontWeight="700" fill="#999da1" transform="rotate(3 3200 329)">LEFT</text>
        <text x="3236" y="264" fontSize="14" fontWeight="700" fill="#a0a3a8" transform="rotate(-87 3236 264)">TOP</text>
        <path d="M3162 360L3276 368" stroke="#7ff77f" strokeWidth="2.500" />
        <path d="M3281 290L3277 355" stroke="#f88" strokeWidth="2" />
        <path d="M3283 264L3276 367" stroke="#6464f5" strokeWidth="3" />
        <text x="3139" y="370" fontSize="29" fontWeight="600" fill="#7ff77f">Y</text>
        <text x="3275" y="260" fontSize="30" fontWeight="600" fill="#7c7cff">Z</text>
      </g>
    </svg>
  );
}

/* ---------- navigation bar ---------- */

const nav: { name: string; cls: string; caret: boolean; art: React.ReactElement }[] = [
  {
    name: "Orbit", cls: "w-[66px] bg-[#0696d7] pl-1.5 gap-2.5", caret: true,
    art: (
      <g>
        <path d="M13 12C-2 13-3 23 9 22M20 12c14 1 13 11-1 11" stroke="#333a44" strokeWidth="1.600" />
        <path d="M16 1l6 7h-3v23h-6V8h-3z" fill="#e9edf2" stroke="#333a44" strokeWidth="1.300" />
        <path d="M8 22h11" stroke="#333a44" strokeWidth="1.600" />
        <path d="M5 22l6-4v8z" fill="#333a44" />
      </g>
    ),
  },
  {
    name: "Look At", cls: "w-[47px] justify-center", caret: false,
    art: (
      <g stroke="#3c4048" strokeWidth="1.500">
        <path d="M4 9L12 2l-2 5 13-3 1 5" fill="#bfc3ca" />
        <rect x="2" y="10" width="28" height="19" fill="#eceef1" />
        <rect x="6" y="14" width="20" height="10" fill="#8b929c" />
      </g>
    ),
  },
  {
    name: "Pan", cls: "w-[52px] justify-center", caret: false,
    art: <path d="M10 29L3 20q-3-4 0-4l6 4L6 7q0-3 3-1l4 10V3q1-3 4 0l1 13 3-12q2-3 3 0l-1 13 5-8q3-2 3 1l-5 13-4 7z" fill="#fafafa" stroke="#444a52" strokeWidth="1.400" strokeLinejoin="round" />,
  },
  {
    name: "Zoom", cls: "w-[52px] justify-center", caret: false,
    art: (
      <g>
        <path d="M20 19l10 10" stroke="#3a4046" strokeWidth="4.500" />
        <circle cx="12" cy="12" r="10" fill="#e4f0f0" stroke="#5b646c" strokeWidth="1.600" />
        <path d="M25 5h6M28 2v6M25 11h6" stroke="#333" strokeWidth="1.300" />
      </g>
    ),
  },
  {
    name: "Zoom Window", cls: "w-[73px] pl-2.5 gap-3", caret: true,
    art: (
      <g>
        <path d="M1 2h29v29H1z" stroke="#888" strokeDasharray="5 3" />
        <path d="M20 20l9 9" stroke="#3a4046" strokeWidth="4.500" />
        <circle cx="12" cy="13" r="10.500" fill="#e4f0f0" stroke="#5b646c" strokeWidth="1.600" />
      </g>
    ),
  },
  {
    name: "Display Settings", cls: "w-[58px] justify-center gap-1.5", caret: true,
    art: (
      <g stroke="#3c4048" strokeWidth="1.200">
        <path d="M13 24h6v4l4 2H9l4-2z" fill="#cfd3d8" />
        <rect x="1" y="1" width="30" height="23" fill="#f6f6f6" />
        <rect x="4" y="4" width="24" height="17" fill="#93b3dc" stroke="#25477d" />
      </g>
    ),
  },
  {
    name: "Grid and Snaps", cls: "w-[62px] justify-center gap-1.5", caret: true,
    art: (
      <g>
        <rect x="2" y="2" width="28" height="28" fill="#f2f2f4" />
        <path d="M2 16h28v14H2z" fill="#a5aab8" opacity=".5" />
        <path d="M6 2v28M10 2v28M14 2v28M18 2v28M22 2v28M26 2v28M2 6h28M2 10h28M2 14h28M2 18h28M2 22h28M2 26h28" stroke="#7b808c" />
        <rect x="2" y="2" width="28" height="28" stroke="#3c4048" strokeWidth="1.500" />
      </g>
    ),
  },
  {
    name: "Viewports", cls: "w-[64px] justify-center gap-1.5", caret: true,
    art: (
      <g fill="#93b3dc" stroke="#25477d" strokeWidth="1.300">
        <rect x="2" y="4" width="14" height="12" />
        <rect x="16" y="4" width="14" height="12" />
        <rect x="2" y="16" width="14" height="12" />
        <rect x="16" y="16" width="14" height="12" />
        <path d="M4 6h10v8H4zM18 6h10v8H18zM4 18h10v8H4zM18 18h10v8H18z" stroke="#5f87bd" />
      </g>
    ),
  },
];

function Timeline() {
  const items = ["sketch", "extrude", "move", "sketch", "extrude", "extrude", "extrude", "extrude", "extrude", "extrude"];
  const play: [string, string][] = [
    ["Go to beginning", "M0 3h4v20H0zM22 3v20L5 13z"],
    ["Step back", "M19 3v20L1 13zM21 10h3v8h-3z"],
    ["Play", "M1 1v24l22-12z"],
    ["Step forward", "M7 3v20l18-10zM1 10h4v8H1z"],
    ["Go to end", "M2 3v20l17-10zM20 3h4v20h-4z"],
  ];
  return (
    <footer className="shrink-0 bg-[#101014]">
      <div className="flex h-[100px] items-start rounded-b-[20px] border-t-[6px] border-[#cbcbcb] bg-[#f1f1f1] pt-[18px]">
        <div className="ml-5 flex w-[262px] gap-[23px] pt-4">
          {play.map(([n, d]) => (
            <button key={n} aria-label={n}>
              <svg width="26" height="26" viewBox="0 0 26 26" aria-hidden="true">
                <path d={d} fill="#5f5f5f" />
              </svg>
            </button>
          ))}
        </div>
        <div className="pt-3">
          <div className="flex">
            {items.map((t, i) => (
              <button key={i} aria-label={t} className="flex h-8 w-12 justify-center">
                {t === "sketch" ? <SketchIcon /> : t === "move" ? <Move s={32} /> : <Extrude s={32} />}
              </button>
            ))}
          </div>
          <div className="mt-1.5 ml-6 flex h-3.5 w-[436px] justify-between border-b-4 border-[#cbcbcb]">
            {items.map((_, i) => (
              <span key={i} className="h-2.5 w-1 bg-[#cbcbcb]" />
            ))}
          </div>
        </div>
        <svg width="24" height="64" viewBox="0 0 24 64" className="-ml-3" aria-hidden="true">
          <path d="M0 0h24v7l-8 9h-2v48h-4V16H8L0 7z" fill="#636363" />
        </svg>
        <button aria-label="Timeline settings" className="mr-5 ml-auto self-start pt-[14px]">
          <Gear />
        </button>
      </div>
    </footer>
  );
}

export default function App() {
  return (
    <div className="flex h-screen flex-col overflow-hidden bg-white font-['Noto_Sans',sans-serif] text-[22px] leading-[30px] text-[#3c3c3c]">
      <Ribbon />
      <main className="relative flex-1 overflow-hidden">
        <Scene />
        <div className="relative flex h-full flex-col justify-between">
          <Browser />
          <div className="flex items-end pb-[9px]">
            <div className="ml-1.5 flex h-[50px] w-[600px] items-center border-x-2 border-b-[3px] border-[#c8c8c8] bg-[#f1f1f1] pr-[22px] pl-[49px] text-[21px] text-[#666]">
              <h2 className="flex-1">COMMENTS</h2>
              <button aria-label="Expand comments">
                <svg width="18" height="18" viewBox="0 0 18 18" aria-hidden="true">
                  <circle cx="9" cy="9" r="9" fill="#333" />
                  <path d="M4 9h10M9 4v10" stroke="#f1f1f1" strokeWidth="2" />
                </svg>
              </button>
            </div>
            <div className="mb-[3px] flex h-12 flex-1 justify-center pr-[598px]">
              <div className="flex bg-[#f1f1f1]">
                {nav.map((n) => (
                  <button key={n.name} aria-label={n.name} className={`flex h-12 items-center ${n.cls}`}>
                    <Ico s={32} v={32}>{n.art}</Ico>
                    {n.caret && <Caret c={n.name === "Orbit" ? "border-t-white" : "border-t-[#333]"} />}
                  </button>
                ))}
              </div>
            </div>
          </div>
        </div>
      </main>
      <Timeline />
    </div>
  );
}
